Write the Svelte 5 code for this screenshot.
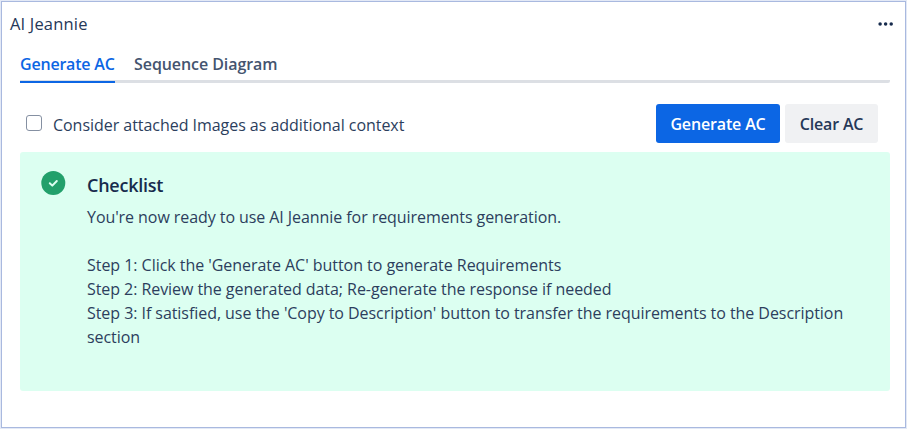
<script>
  let activeTab = $state(0);
  let includeImages = $state(false);
  const tabs = ['Generate AC', 'Sequence Diagram'];
</script>

<main class="page">
  <section class="panel">
    <header>
      <h1>AI Jeannie</h1>
      <button class="more" aria-label="More actions">
        <svg width="16" height="4" viewBox="0 0 16 4" fill="#172b4d">
          <circle cx="2.1" cy="2" r="1.75" />
          <circle cx="7.6" cy="2" r="1.75" />
          <circle cx="13.2" cy="2" r="1.75" />
        </svg>
      </button>
    </header>

    <nav role="tablist">
      {#each tabs as tab, i}
        <button role="tab" class="tab tab-{i}" class:active={activeTab === i} aria-selected={activeTab === i} onclick={() => (activeTab = i)}><span>{tab}</span></button>
      {/each}
    </nav>

    <div class="toolbar">
      <label>
        <input type="checkbox" bind:checked={includeImages} />
        <span>Consider attached Images as additional context</span>
      </label>
      <div class="actions">
        <button class="btn primary">Generate AC</button>
        <button class="btn clear">Clear AC</button>
      </div>
    </div>

    <div class="message">
      <svg class="check" width="25" height="25" viewBox="0 0 25 25">
        <circle cx="12.3" cy="12" r="12" fill="#22a06b" />
        <path d="M8.8 12.2l2.5 2.4 4.5-4.6" fill="none" stroke="#dcfff1" stroke-width="2" stroke-linecap="round" stroke-linejoin="round" />
      </svg>
      <div class="content">
        <h2>Checklist</h2>
        <p class="intro">You're now ready to use AI Jeannie for requirements generation.</p>
        <p class="s1">Step 1: Click the 'Generate AC' button to generate Requirements</p>
        <p class="s2">Step 2: Review the generated data; Re-generate the response if needed</p>
        <p class="s3">Step 3: If satisfied, use the 'Copy to Description' button to transfer the requirements to the Description<br />section</p>
      </div>
    </div>
  </section>
</main>

<style>
  .page {
    box-sizing: border-box;
    width: 907px;
    height: 429px;
    padding: 1px;
    background: #e3e9f6;
    font-family: 'Open Sans', 'Noto Sans', sans-serif;
    font-size: 16px;
    color: #2c3e5d;
  }
  .panel {
    box-sizing: border-box;
    height: 427px;
    border: 1px solid #a9b9df;
    background: #fff;
    padding: 0 15px 0 18px;
  }
  button {
    font: inherit;
    border: 0;
    padding: 0;
    background: none;
    cursor: pointer;
  }
  h1, h2, p { margin: 0; white-space: nowrap; }
  header {
    display: flex;
    justify-content: space-between;
    align-items: center;
    height: 44px;
    margin: 0 -4px 0 -10px;
  }
  h1 { font-size: 16.5px; font-weight: 400; line-height: 24px; color: #253858; letter-spacing: 0.17px; }
  .more { display: flex; }
  nav {
    display: flex;
    gap: 19px;
    height: 37px;
    box-sizing: border-box;
    border-bottom: 3px solid #dcdfe4;
    border-radius: 0 0 2px 2px;
  }
  .tab {
    height: 37px;
    box-sizing: border-box;
    padding: 4px 0 0;
    display: flex;
    line-height: 28px;
    font-weight: 600;
    color: #44546f;
    white-space: nowrap;
    border-bottom: 2px solid transparent;
  }
  .tab-0 { width: 95px; letter-spacing: -0.2px; }
  .tab-1 { letter-spacing: -0.07px; }
  .tab.active { color: #0c66e4; border-color: #0c66e4; }
  .toolbar {
    display: flex;
    justify-content: space-between;
    align-items: center;
    height: 39px;
    padding: 0 12px 0 6px;
    margin-top: 21px;
  }
  label { display: flex; align-items: center; gap: 11px; letter-spacing: -0.04px; line-height: 24px; white-space: nowrap; }
  label span { padding-top: 2px; }
  input {
    appearance: none;
    box-sizing: border-box;
    width: 16px;
    height: 16px;
    margin: 0 0 2px;
    border: 1px solid #8590a2;
    border-radius: 3px;
    background: #fff;
  }
  input:checked { background: #0c66e4; }
  .actions { display: flex; gap: 5px; }
  .btn { height: 39px; border-radius: 3px; font-weight: 600; letter-spacing: -0.15px; white-space: nowrap; }
  .primary { width: 124px; background: #0c66e4; color: #fff; }
  .clear { width: 93px; background: #f0f1f3; color: #253858; }
  .message {
    display: flex;
    gap: 21px;
    height: 239px;
    box-sizing: border-box;
    margin-top: 9px;
    padding: 19px 21px;
    border-radius: 3px;
    background: #dcfff1;
  }
  .check { flex: none; }
  .content { line-height: 24px; }
  h2 { font-size: 18px; font-weight: 600; line-height: 28px; color: #172b4d; letter-spacing: -0.25px; }
  .intro { margin: 6px 0 24px; letter-spacing: -0.07px; }
  .s1 { letter-spacing: -0.04px; }
  .s2 { letter-spacing: -0.06px; }
  .s3 { letter-spacing: -0.055px; }
</style>
